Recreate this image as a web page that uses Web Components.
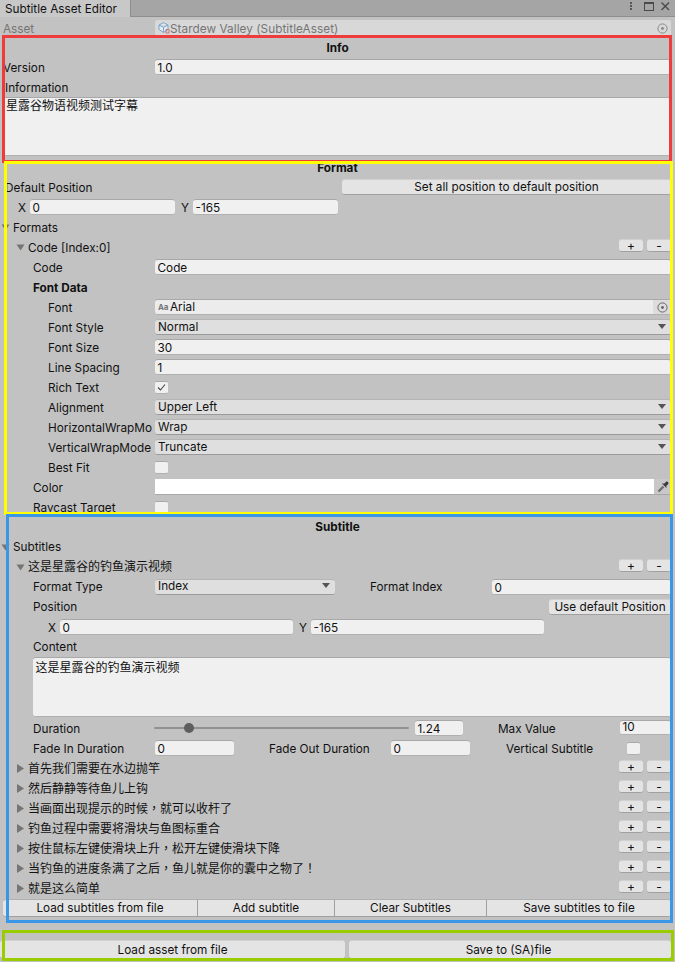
<!doctype html>
<html>
<head>
<meta charset="utf-8">
<title>Subtitle Asset Editor</title>
<style>
  html, body { margin: 0; background: #c2c2c2; }
  body { width: 675px; height: 962px; overflow: hidden; position: relative; color: #111;
         font: 11.75px/16px Inter, "Noto Sans CJK SC", sans-serif; }
</style>
</head>
<body>
<ue-tab-bar title-text="Subtitle Asset Editor"></ue-tab-bar>

<ue-row label="Asset" indent="3" disabled>
  <ue-object-field value="Stardew Valley (SubtitleAsset)" kind="asset" disabled></ue-object-field>
</ue-row>

<ue-heading style="height:19px">Info</ue-heading>
<ue-row label="Version" indent="3"><ue-text-field value="1.0"></ue-text-field></ue-row>
<ue-row label="Information" indent="5"></ue-row>
<ue-text-area value="星露谷物语视频测试字幕" style="margin:0 4px 2px 3px;height:59px;padding:0 3px;line-height:15px"></ue-text-area>

<ue-heading style="height:19px">Format</ue-heading>
<ue-row label="Default Position" indent="5">
  <ue-btn style="margin-left:187px;height:16px">Set all position to default position</ue-btn>
</ue-row>
<ue-row>
  <ue-axis-label style="margin-left:18px">X</ue-axis-label>
  <ue-text-field value="0" style="flex:none;width:145px"></ue-text-field>
  <ue-axis-label style="margin-left:6px">Y</ue-axis-label>
  <ue-text-field value="-165" style="flex:none;width:145px"></ue-text-field>
</ue-row>
<ue-foldout label="Formats" indent="1" open></ue-foldout>
<ue-foldout label="Code [Index:0]" indent="16" open tools></ue-foldout>
<ue-row label="Code" indent="33"><ue-text-field value="Code"></ue-text-field></ue-row>
<ue-row label="Font Data" indent="33" bold></ue-row>
<ue-row label="Font" indent="48"><ue-object-field value="Arial" kind="font"></ue-object-field></ue-row>
<ue-row label="Font Style" indent="48"><ue-popup value="Normal"></ue-popup></ue-row>
<ue-row label="Font Size" indent="48"><ue-text-field value="30"></ue-text-field></ue-row>
<ue-row label="Line Spacing" indent="48"><ue-text-field value="1"></ue-text-field></ue-row>
<ue-row label="Rich Text" indent="48"><ue-check checked></ue-check></ue-row>
<ue-row label="Alignment" indent="48"><ue-popup value="Upper Left"></ue-popup></ue-row>
<ue-row label="HorizontalWrapMo" indent="48"><ue-popup value="Wrap"></ue-popup></ue-row>
<ue-row label="VerticalWrapMode" indent="48"><ue-popup value="Truncate"></ue-popup></ue-row>
<ue-row label="Best Fit" indent="48"><ue-check></ue-check></ue-row>
<ue-row label="Color" indent="33"><ue-color-field></ue-color-field></ue-row>
<ue-row label="Raycast Target" indent="33"><ue-check></ue-check></ue-row>

<ue-heading>Subtitle</ue-heading>
<ue-foldout label="Subtitles" indent="1" open up></ue-foldout>
<ue-foldout label="这是星露谷的钓鱼演示视频" indent="16" open tools up></ue-foldout>
<ue-row label="Format Type" indent="33" up>
  <ue-popup value="Index" style="flex:none;width:180px;padding-bottom:3px"></ue-popup>
  <ue-axis-label style="margin-left:35px;width:122px;padding-top:0;margin-top:-1px">Format Index</ue-axis-label>
  <ue-text-field value="0"></ue-text-field>
</ue-row>
<ue-row label="Position" indent="33" up>
  <ue-btn style="margin-left:394px;height:16px">Use default Position</ue-btn>
</ue-row>
<ue-row>
  <ue-axis-label style="margin-left:48px">X</ue-axis-label>
  <ue-text-field value="0" style="flex:none;width:233px"></ue-text-field>
  <ue-axis-label style="margin-left:6px">Y</ue-axis-label>
  <ue-text-field value="-165" style="flex:none;width:233px"></ue-text-field>
</ue-row>
<ue-row label="Content" indent="33" up></ue-row>
<ue-text-area value="这是星露谷的钓鱼演示视频" style="margin:0 4px 1px 33px;height:60px"></ue-text-area>
<ue-row label="Duration" indent="33">
  <ue-slider style="width:255px;margin-left:-1px"></ue-slider>
  <ue-text-field value="1.24" style="flex:none;width:48px;margin-left:6px"></ue-text-field>
  <ue-axis-label style="margin-left:35px;width:122px">Max Value</ue-axis-label>
  <ue-text-field value="10" style="line-height:12px;height:15px;margin-bottom:2px"></ue-text-field>
</ue-row>
<ue-row label="Fade In Duration" indent="33">
  <ue-text-field value="0" style="flex:none;width:79px"></ue-text-field>
  <ue-axis-label style="margin-left:35px;width:122px">Fade Out Duration</ue-axis-label>
  <ue-text-field value="0" style="flex:none;width:79px"></ue-text-field>
  <ue-axis-label style="margin-left:36px;width:121px">Vertical Subtitle</ue-axis-label>
  <ue-check></ue-check>
</ue-row>
<ue-foldout label="首先我们需要在水边抛竿" indent="16" tools></ue-foldout>
<ue-foldout label="然后静静等待鱼儿上钩" indent="16" tools></ue-foldout>
<ue-foldout label="当画面出现提示的时候，就可以收杆了" indent="16" tools></ue-foldout>
<ue-foldout label="钓鱼过程中需要将滑块与鱼图标重合" indent="16" tools></ue-foldout>
<ue-foldout label="按住鼠标左键使滑块上升，松开左键使滑块下降" indent="16" tools></ue-foldout>
<ue-foldout label="当钓鱼的进度条满了之后，鱼儿就是你的囊中之物了！" indent="16" tools></ue-foldout>
<ue-foldout label="就是这么简单" indent="16" tools></ue-foldout>

<ue-btn-group style="margin:1px 4px 0 3px">
  <ue-btn joined style="width:195px">Load subtitles from file</ue-btn>
  <ue-btn joined style="width:137px">Add subtitle</ue-btn>
  <ue-btn joined style="width:152px">Clear Subtitles</ue-btn>
  <ue-btn joined style="flex:1">Save subtitles to file</ue-btn>
</ue-btn-group>

<ue-btn-group style="margin:23px 4px 0 0;gap:4px">
  <ue-btn style="flex:none;width:345px;height:19px">Load asset from file</ue-btn>
  <ue-btn style="flex:1;height:19px;padding-right:3px">Save to (SA)file</ue-btn>
</ue-btn-group>

<ue-frame color="#ee3c3c" box="2,35,672,163"></ue-frame>
<ue-frame color="#ffff00" box="4,161,673,515"></ue-frame>
<ue-frame color="#3a96e6" box="6,514,673,923"></ue-frame>
<ue-frame color="#9acd00" box="2,930,674,961"></ue-frame>

<script>
const FIELD_BASE = `
  flex: 1; min-width: 0; display: block; box-sizing: border-box; height: 16px;
  line-height: 15px; white-space: nowrap; overflow: hidden;`;

const HAS_CJK = /[\u4e00-\u9fff]/;

class UeTabBar extends HTMLElement {
  connectedCallback() {
    this.attachShadow({ mode: 'open' }).innerHTML = `
      <style>
        :host { display: flex; height: 16px; margin-bottom: 1px; background: #a5a5a5; border-bottom: 1px solid #8e8e8e; }
        .tab { width: 131px; box-sizing: border-box; padding: 1px 0 0 5px; line-height: 16px; background: #c8c8c8;
               border-right: 1px solid #8e8e8e; height: 17px; }
        .icons { margin-left: auto; display: flex; }
        svg { display: block; }
      </style>
      <div class="tab">${this.getAttribute('title-text')}</div>
      <div class="icons">
        <svg width="60" height="16" viewBox="0 0 60 16">
          <g fill="#555"><rect x="15" y="2" width="2" height="2"/><rect x="15" y="5" width="2" height="2"/><rect x="15" y="8" width="2" height="2"/></g>
          <rect x="29.5" y="2.5" width="9" height="8" fill="none" stroke="#4a4a4a"/><rect x="29" y="2" width="10" height="2" fill="#4a4a4a"/>
          <path d="M46.5 2.5 L54 10 M54 2.5 L46.5 10" stroke="#4a4a4a" stroke-width="1.4" fill="none"/>
        </svg>
      </div>`;
  }
}

class UeRow extends HTMLElement {
  connectedCallback() {
    const indent = Number(this.getAttribute('indent') || 0);
    const label = this.getAttribute('label');
    this.attachShadow({ mode: 'open' }).innerHTML = `
      <style>
        :host { display: flex; align-items: center; height: 20px; padding: 0 4px 0 ${indent}px; box-sizing: border-box; }
        :host([disabled]) { color: #757575; }
        :host([disabled]) .label { padding-top: 2px; }
        :host([bold]) .label { font-weight: 700; }
        :host([up]) .label { padding-top: 0; margin-top: -1px; }
        .label { flex: none; width: ${152 - indent}px; margin-right: 3px; white-space: nowrap; overflow: hidden; padding-top: 1px; }
      </style>
      ${label ? `<span class="label">${label}</span>` : ''}
      <slot></slot>`;
  }
}

class UeHeading extends HTMLElement {
  constructor() {
    super();
    this.attachShadow({ mode: 'open' }).innerHTML = `
      <style>
        :host { display: flex; align-items: center; justify-content: center; height: 20px; font-weight: 700; }
      </style>
      <slot></slot>`;
  }
}

class UeAxisLabel extends HTMLElement {
  constructor() {
    super();
    this.attachShadow({ mode: 'open' }).innerHTML = `
      <style>
        :host { display: block; flex: none; width: 12px; white-space: nowrap; padding-top: 1px; }
      </style>
      <slot></slot>`;
  }
}

class UeTextField extends HTMLElement {
  connectedCallback() {
    this.attachShadow({ mode: 'open' }).innerHTML = `
      <style>
        :host { ${FIELD_BASE} line-height: 16px; background: #f0f0f0; border-radius: 3px; padding: 0 2.5px;
                border-top: 1px solid #a8a8a8; border-bottom: 1px solid #b0b0b0; }
      </style>${this.getAttribute('value') || ''}`;
  }
}

class UeTextArea extends HTMLElement {
  connectedCallback() {
    this.attachShadow({ mode: 'open' }).innerHTML = `
      <style>
        :host { display: block; box-sizing: border-box; background: #f0f0f0; border-radius: 3px; padding: 2px 2.5px; font-size: 12px;
                border-top: 1px solid #a8a8a8; border-bottom: 1px solid #b0b0b0; }
      </style>${this.getAttribute('value') || ''}`;
  }
}

class UePopup extends HTMLElement {
  connectedCallback() {
    this.attachShadow({ mode: 'open' }).innerHTML = `
      <style>
        :host { ${FIELD_BASE} display: flex; justify-content: space-between; align-items: center; background: #dfdfdf;
                border-radius: 3px; padding: 0 5px 1px 3px; border-bottom: 1px solid #9a9a9a; border-top: 1px solid #b4b4b4; line-height: 14px; }
        svg { flex: none; }
      </style>
      <span>${this.getAttribute('value') || ''}</span>
      <svg width="8" height="5" viewBox="0 0 8 5"><path d="M0 0H8L4 5Z" fill="#555"/></svg>`;
  }
}

class UeObjectField extends HTMLElement {
  connectedCallback() {
    const disabled = this.hasAttribute('disabled');
    const icon = this.getAttribute('kind') === 'font'
      ? `<span class="aa">Aa</span>`
      : `<svg width="12" height="12" viewBox="0 0 12 12">
           <path d="M5.5 .7 L10 3 V7.5 L5.5 10.5 L1 7.5 V3 Z M1 3 L5.5 5.3 L10 3 M5.5 5.3 V10.5" fill="#e2ebf4" stroke="#7ba6cb"/>
           <path d="M8 7.5 H11 V11 H8 Z" fill="none" stroke="#c87878"/>
         </svg>`;
    const mark = disabled ? '#8a8a8a' : '#666';
    this.attachShadow({ mode: 'open' }).innerHTML = `
      <style>
        :host { ${FIELD_BASE} display: flex; align-items: center; background: ${disabled ? '#d8d8d8' : '#ececec'}; border-radius: 3px;
                color: ${disabled ? '#757575' : 'inherit'}; ${disabled ? '' : 'border-top: 1px solid #a8a8a8; border-bottom: 1px solid #b0b0b0;'} }
        .ic { flex: none; width: 15px; padding-left: 3px; display: flex; align-items: center; box-sizing: border-box; }
        .aa { font-size: 8px; color: #777; font-weight: 700; letter-spacing: -.2px; }
        .val { flex: 1; white-space: nowrap; overflow: hidden; line-height: 14px; ${disabled ? 'padding-top: 2px; letter-spacing: .06px;' : ''} }
        .pick { flex: none; width: 18px; height: 16px; display: flex; align-items: center; justify-content: center; background: ${disabled ? '#d8d8d8' : '#dcdcdc'}; }
      </style>
      <span class="ic">${icon}</span>
      <span class="val">${this.getAttribute('value')}</span>
      <span class="pick">
        <svg width="11" height="11" viewBox="0 0 11 11">
          <circle cx="5.5" cy="5.5" r="4.6" fill="none" stroke="${mark}"/><circle cx="5.5" cy="5.5" r="1.4" fill="${mark}"/>
        </svg>
      </span>`;
  }
}

class UeColorField extends HTMLElement {
  constructor() {
    super();
    this.attachShadow({ mode: 'open' }).innerHTML = `
      <style>
        :host { ${FIELD_BASE} display: flex; border-bottom: 1px solid #a8a8a8; }
        .swatch { flex: 1; background: #fff; }
        .dropper { flex: none; width: 17px; display: flex; align-items: center; justify-content: center; background: #c8c8c8; }
      </style>
      <div class="swatch"></div>
      <div class="dropper">
        <svg width="12" height="12" viewBox="0 0 12 12">
          <path d="M1.5 10.5 L6.5 5.5" stroke="#6e6e6e" stroke-width="2.4" fill="none"/>
          <path d="M5.2 2.8 L9.2 6.8 L9.9 6.1 L9 5.2 L11.3 2.9 C12 1.5 10.5 0 9.1 .7 L6.8 3 L5.9 2.1 Z" fill="#3c3c3c"/>
        </svg>
      </div>`;
  }
}

class UeCheck extends HTMLElement {
  connectedCallback() {
    this.attachShadow({ mode: 'open' }).innerHTML = `
      <style>
        :host { display: block; flex: none; width: 13px; height: 13px; box-sizing: border-box; background: #f0f0f0; border-radius: 2px;
                border-top: 1px solid #a8a8a8; border-bottom: 1px solid #b0b0b0; }
        svg { display: block; }
      </style>
      ${this.hasAttribute('checked') ? `<svg width="13" height="11" viewBox="0 0 13 11"><path d="M3 5.5 L5.5 8 L10 2.5" fill="none" stroke="#444" stroke-width="1.1"/></svg>` : ''}`;
  }
}

class UeBtn extends HTMLElement {
  constructor() {
    super();
    this.attachShadow({ mode: 'open' }).innerHTML = `
      <style>
        :host { display: flex; flex: 1; min-width: 0; align-items: center; justify-content: center; box-sizing: border-box; height: 18px;
                background: #e4e4e4; border-radius: 3px; border-bottom: 1px solid #a0a0a0; border-top: 1px solid #d0d0d0; white-space: nowrap; }
        :host([joined]) { flex: none; border-radius: 0; border-right: 1px solid #a0a0a0; border-top: 1px solid #b0b0b0; }
        :host([joined]:first-child) { border-radius: 3px 0 0 3px; }
        :host([joined]:last-child) { border-radius: 0 3px 3px 0; border-right: 0; }
        :host([tool]) { flex: none; width: 24px; height: 13px; line-height: 11px; font-size: 12px; }
      </style>
      <slot></slot>`;
  }
}

class UeBtnGroup extends HTMLElement {
  constructor() {
    super();
    this.attachShadow({ mode: 'open' }).innerHTML = `
      <style>:host { display: flex; }</style><slot></slot>`;
  }
}

class UeFoldout extends HTMLElement {
  connectedCallback() {
    const indent = Number(this.getAttribute('indent') || 0);
    const open = this.hasAttribute('open');
    const tools = this.hasAttribute('tools');
    const raw = this.getAttribute('label');
    // the reference's CJK font centres full-width punctuation, which the TC face does as well
    const label = raw.replace(/[，！]/g, (m) => `<span class="punct">${m}</span>`);
    this.attachShadow({ mode: 'open' }).innerHTML = `
      <style>
        :host { display: flex; align-items: center; height: 20px; padding: 0 4px 0 ${indent}px; box-sizing: border-box; }
        :host([up]) .text { padding-top: 0; margin-top: -1px; }
        svg { flex: none; width: 9px; margin-right: 3px; }
        .text { flex: 1; white-space: nowrap; padding-top: 1px; ${HAS_CJK.test(raw) ? 'font-size: 12px;' : ''} }
        .punct { font-family: "Noto Sans CJK TC", sans-serif; }
        .tools { display: flex; gap: 4px; margin-bottom: 3px; }
      </style>
      <svg height="9" viewBox="0 0 9 9"><path d="${open ? 'M.5 1.5H8.5L4.5 7.5Z' : 'M1 0V9L8 4.5Z'}" fill="#757575"/></svg>
      <span class="text">${label}</span>
      ${tools ? `<div class="tools"><ue-btn tool>+</ue-btn><ue-btn tool>-</ue-btn></div>` : ''}`;
  }
}

class UeSlider extends HTMLElement {
  constructor() {
    super();
    this.attachShadow({ mode: 'open' }).innerHTML = `
      <style>
        :host { display: block; flex: none; position: relative; height: 16px; }
        .track { position: absolute; left: 0; right: 0; top: 7px; height: 2px; background: #909090; border-radius: 1px; }
        .thumb { position: absolute; left: 30px; top: 3px; width: 10px; height: 10px; border-radius: 50%; background: #5e5e5e; }
      </style>
      <div class="track"></div><div class="thumb"></div>`;
  }
}

// The coloured outlines are annotations drawn on top of the window, so they sit at fixed coordinates.
class UeFrame extends HTMLElement {
  connectedCallback() {
    const [l, t, r, b] = this.getAttribute('box').split(',').map(Number);
    this.attachShadow({ mode: 'open' }).innerHTML = `
      <style>
        :host { position: absolute; left: ${l}px; top: ${t}px; width: ${r - l}px; height: ${b - t}px; box-sizing: border-box;
                border: 3px solid ${this.getAttribute('color')}; pointer-events: none; }
      </style>`;
  }
}

customElements.define('ue-tab-bar', UeTabBar);
customElements.define('ue-row', UeRow);
customElements.define('ue-heading', UeHeading);
customElements.define('ue-axis-label', UeAxisLabel);
customElements.define('ue-text-field', UeTextField);
customElements.define('ue-text-area', UeTextArea);
customElements.define('ue-popup', UePopup);
customElements.define('ue-object-field', UeObjectField);
customElements.define('ue-color-field', UeColorField);
customElements.define('ue-check', UeCheck);
customElements.define('ue-btn', UeBtn);
customElements.define('ue-btn-group', UeBtnGroup);
customElements.define('ue-foldout', UeFoldout);
customElements.define('ue-slider', UeSlider);
customElements.define('ue-frame', UeFrame);
</script>
</body>
</html>
